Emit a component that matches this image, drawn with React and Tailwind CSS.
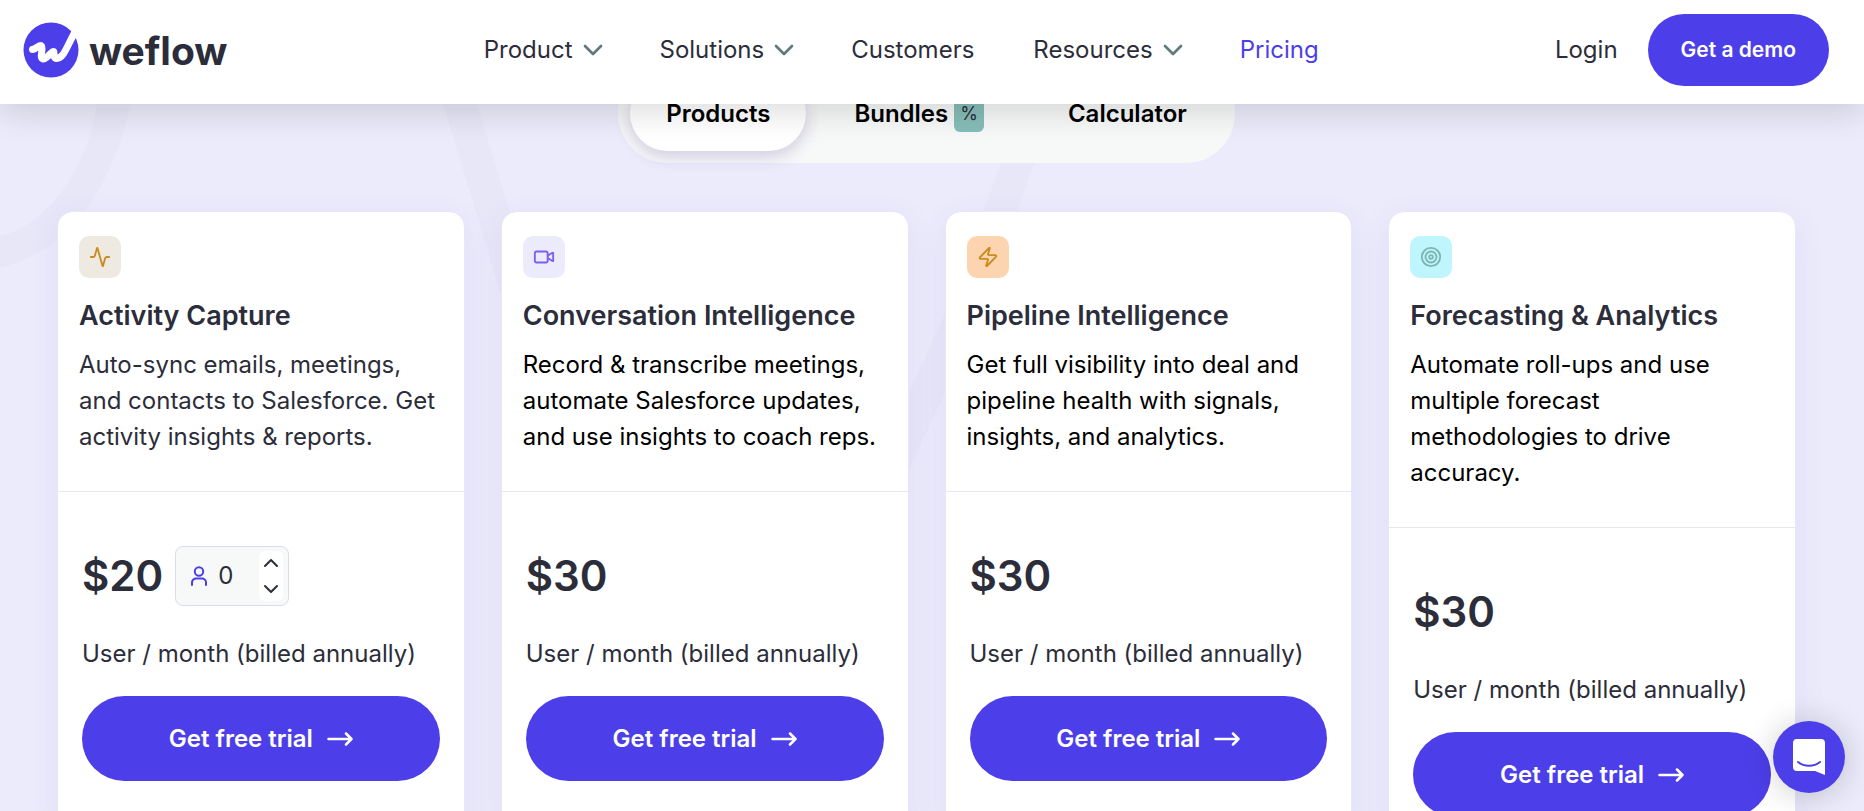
import { useState } from "react";
import {
  Activity,
  ChevronDown,
  ChevronUp,
  Target,
  Video,
  Zap,
} from "lucide-react";

const navItems = [
  { label: "Product", hasMenu: true },
  { label: "Solutions", hasMenu: true },
  { label: "Customers" },
  { label: "Resources", hasMenu: true },
  { label: "Pricing", active: true },
];

const plans = [
  {
    title: "Activity Capture",
    description:
      "Auto-sync emails, meetings, and contacts to Salesforce. Get activity insights & reports.",
    price: 20,
    icon: Activity,
    iconStyle: "bg-[#eeeae2] text-[#c98a1e]",
    textStyle: "text-[#2c2d3a]",
    hasSeats: true,
  },
  {
    title: "Conversation Intelligence",
    description:
      "Record & transcribe meetings, automate Salesforce updates, and use insights to coach reps.",
    price: 30,
    icon: Video,
    iconStyle: "bg-[#ecebfc] text-[#7a5ff0]",
    textStyle: "text-black",
  },
  {
    title: "Pipeline Intelligence",
    description:
      "Get full visibility into deal and pipeline health with signals, insights, and analytics.",
    price: 30,
    icon: Zap,
    iconStyle: "bg-[#fcd5b0] text-[#c98a1e]",
    textStyle: "text-black",
  },
  {
    title: "Forecasting & Analytics",
    description:
      "Automate roll-ups and use multiple forecast methodologies to drive accuracy.",
    price: 30,
    icon: Target,
    iconStyle: "bg-[#bff5fd] text-[#7db5b0]",
    textStyle: "text-black",
  },
];

const Logo = () => (
  <a href="#" className="flex items-center gap-2.5 pr-5 text-[#2c2d3a]">
    <svg width="56" height="56" viewBox="0 0 56 56" aria-hidden="true">
      <circle cx="28" cy="28" r="27.5" fill="#4c3fe9" />
      <path
        d="M9.500 27.500 C13 27 17 22 18.500 24 C20.500 27 16 36 20 37 C23.500 37.500 28 29.500 30.500 29.500 C32 30.500 29.500 36.500 33.500 36.500 C41 36 43 26 52.500 9"
        fill="none"
        stroke="#fff"
        strokeWidth="7"
        strokeLinecap="round"
        strokeLinejoin="round"
      />
    </svg>
    <span className="text-[39px] leading-none font-bold">weflow</span>
  </a>
);

const Header = () => (
  <header className="relative z-10 flex h-26 items-center justify-between bg-white pr-[35px] pb-1 pl-[23px] shadow-[0_8px_32px_rgba(0,0,0,0.14)]">
    <Logo />
    <nav className="flex items-center gap-[59px]">
      {navItems.map(({ label, hasMenu, active }) => (
        <a
          key={label}
          href="#"
          className={`flex items-center gap-1 ${
            active ? "text-[#4c3fe9]" : "text-[#2c2d3a]"
          }`}
        >
          {label}
          {hasMenu && (
            <ChevronDown size={32} className="-mr-2 text-[#5f7a7c]" />
          )}
        </a>
      ))}
    </nav>
    <div className="flex items-center gap-[30px]">
      <a href="#">Login</a>
      <a
        href="#"
        className="flex h-18 items-center rounded-full bg-[#4c3fe9] px-[33px] text-[21px] font-semibold text-white"
      >
        Get a demo
      </a>
    </div>
  </header>
);

const Tabs = () => {
  const [selected, setSelected] = useState("Products");

  const tabStyle = (name) =>
    `flex h-[75px] items-center gap-1.5 rounded-full px-9 ${
      selected === name ? "bg-white shadow-[0_6px_16px_rgba(60,40,140,0.2)]" : ""
    }`;

  return (
    <div className="mx-auto flex w-fit gap-3 rounded-full bg-[#f7f8f8] p-3 font-semibold text-black">
      <button
        className={tabStyle("Products")}
        onClick={() => setSelected("Products")}
      >
        Products
      </button>
      <button
        className={tabStyle("Bundles")}
        onClick={() => setSelected("Bundles")}
      >
        Bundles
        <span className="rounded-md bg-[#86bdb8] px-1.5 py-1.5 text-lg leading-6 font-normal text-[#2c2d3a]">
          %
        </span>
      </button>
      <button
        className={tabStyle("Calculator")}
        onClick={() => setSelected("Calculator")}
      >
        Calculator
      </button>
    </div>
  );
};

const SeatsInput = () => {
  const [seats, setSeats] = useState(0);

  return (
    <div className="flex h-15 w-[114px] items-center rounded-lg border border-[#dcdaf0] bg-[#f7f8f8] py-1 pr-[5px] pl-3.5">
      <svg
        width="18"
        height="20"
        viewBox="0 0 18 20"
        fill="none"
        stroke="#4c3fe9"
        strokeWidth="2"
        strokeLinecap="round"
        aria-hidden="true"
      >
        <circle cx="9" cy="5.500" r="4.200" />
        <path d="M2 19v-2.500a4 4 0 0 1 4-4h6a4 4 0 0 1 4 4V19" />
      </svg>
      <input
        aria-label="Seats"
        value={seats}
        onChange={(e) => setSeats(Number(e.target.value) || 0)}
        className="ml-2.5 w-0 min-w-0 flex-1 outline-none"
      />
      <div className="flex h-full w-6 flex-col items-center justify-between rounded-md bg-white">
        <button aria-label="Add seat" onClick={() => setSeats(seats + 1)}>
          <ChevronUp size={24} />
        </button>
        <button
          aria-label="Remove seat"
          onClick={() => setSeats(Math.max(0, seats - 1))}
        >
          <ChevronDown size={24} />
        </button>
      </div>
    </div>
  );
};

const PlanCard = ({ plan }) => {
  const Icon = plan.icon;

  return (
    <article className="rounded-2xl border border-[#e8e6f7] bg-white shadow-[0_8px_32px_rgba(76,63,180,0.08)]">
      <div className="border-b border-[#e8e6f3] px-[21px] pt-6 pb-9">
        <div
          className={`flex size-[42px] items-center justify-center rounded-[10px] ${plan.iconStyle}`}
        >
          <Icon size={22} strokeWidth={2} />
        </div>
        <h3 className="mt-5 text-[27px] leading-9 font-semibold">
          {plan.title}
        </h3>
        <p className={`mt-[13px] leading-9 ${plan.textStyle}`}>
          {plan.description}
        </p>
      </div>
      <div className="px-6 pt-[54px] pb-12">
        <div className="flex h-15 items-center gap-3">
          <span className="text-[42px] leading-none font-semibold">
            ${plan.price}
          </span>
          {plan.hasSeats && <SeatsInput />}
        </div>
        <p className="mt-[30px] leading-9">User / month (billed annually)</p>
        <a
          href="#"
          className="mt-6 flex h-[85px] items-center justify-center gap-3.5 rounded-full bg-[#4c3fe9] font-semibold text-white"
        >
          Get free trial
          <svg
            width="26"
            height="14"
            viewBox="0 0 26 14"
            fill="none"
            stroke="currentColor"
            strokeWidth="2.500"
            strokeLinecap="round"
            strokeLinejoin="round"
            aria-hidden="true"
          >
            <path d="M1.500 7h23M19 1.500 24.500 7 19 12.500" />
          </svg>
        </a>
      </div>
    </article>
  );
};

const ChatButton = () => (
  <button
    aria-label="Open chat"
    className="fixed right-[19px] bottom-[18px] z-20 flex size-18 items-center justify-center rounded-full bg-[#4c3fe9] shadow-[0_2px_32px_rgba(0,0,0,0.2)]"
  >
    <svg width="32" height="36" viewBox="0 0 32 36" aria-hidden="true">
      <path d="M4 0h24a4 4 0 0 1 4 4v32l-10-4H4a4 4 0 0 1-4-4V4a4 4 0 0 1 4-4z" fill="#fff" />
      <path
        d="M5 23c6 5 16 5 22 0"
        fill="none"
        stroke="#4c3fe9"
        strokeWidth="2"
        strokeLinecap="round"
      />
    </svg>
  </button>
);

const Stripes = () => (
  <svg
    className="absolute inset-x-0 top-0 h-full w-full"
    viewBox="0 0 1864 811"
    preserveAspectRatio="xMinYMin slice"
    fill="#e8e7f8"
    aria-hidden="true"
  >
    <path d="M97 104h34C118 160 85 248 0 268v-32C40 228 85 180 97 104z" />
    <path d="M443 104h34l70 230h-34z" />
    <path d="M1001 163h33L1018 210 943 397 911 465 880 510V440L910 390 943 318 984 210z" />
  </svg>
);

const App = () => (
  <div className="relative h-screen overflow-hidden bg-[#ecebfb] font-['Inter',sans-serif] text-2xl text-[#2c2d3a]">
    <Stripes />
    <Header />
    <main className="relative -mt-10 pr-[68px] pl-[57px]">
      <Tabs />
      <div className="mt-12 grid grid-cols-4 items-start gap-9">
        {plans.map((plan) => (
          <PlanCard key={plan.title} plan={plan} />
        ))}
      </div>
    </main>
    <ChatButton />
  </div>
);

export default App;
